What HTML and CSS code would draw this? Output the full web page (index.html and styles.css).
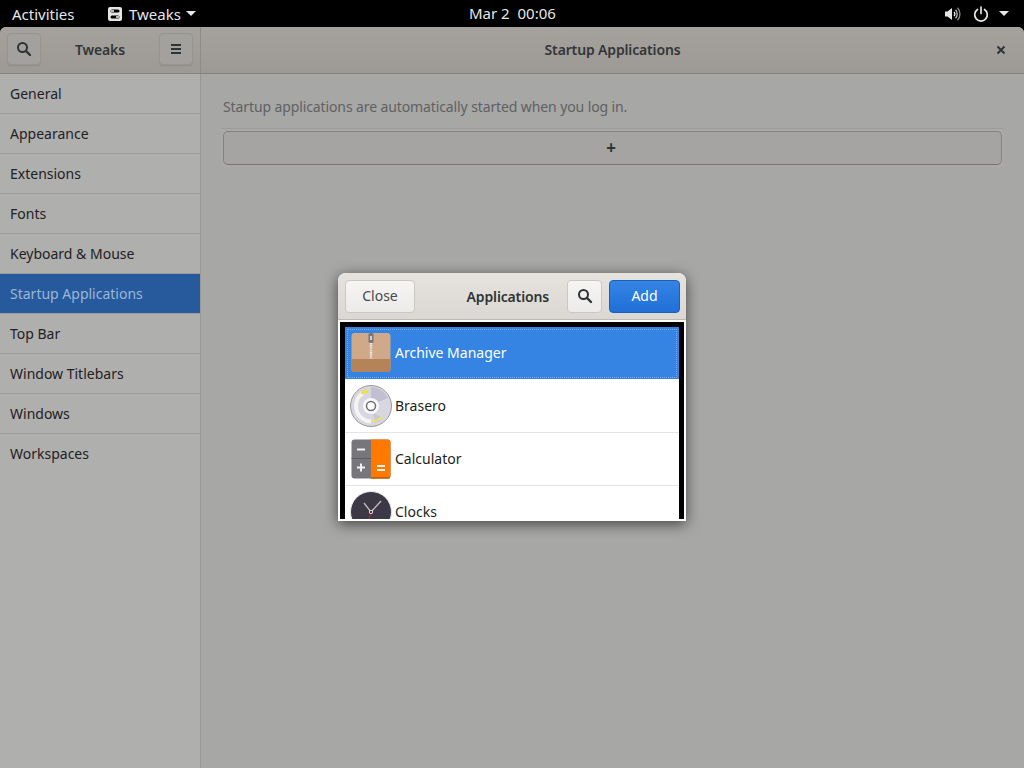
FILE: index.html
```html
<!DOCTYPE html>
<html>
<head>
  <title>Tweaks</title>
  <link rel="stylesheet" href="styles.css">
</head>
<body>
  <div class="topbar">
    <div class="topbar-left">
      <span class="activities">Activities</span>
      <span class="appmenu">
        <svg class="app-icon" width="14" height="14" viewBox="0 0 14 14"><path fill="#e6e6e6" fill-rule="evenodd" d="M2 0h10a2 2 0 0 1 2 2v10a2 2 0 0 1-2 2H2a2 2 0 0 1-2-2V2a2 2 0 0 1 2-2zM4 2.500a1.500 1.500 0 0 0 0 3h6a1.500 1.500 0 0 0 0-3zM4 8.500a1.500 1.500 0 0 0 0 3h6a1.500 1.500 0 0 0 0-3z"/><rect x="3" y="3.200" width="3" height="1.600" fill="#e6e6e6"/><rect x="8" y="9.200" width="3" height="1.600" fill="#e6e6e6"/></svg>
        Tweaks
        <span class="caret"></span>
      </span>
    </div>
    <div class="clock">Mar 2&nbsp; 00:06</div>
    <div class="topbar-right">
      <svg width="16" height="16" viewBox="0 0 16 16"><path fill="#e6e6e6" d="M0 5.500h2.500L7 2v12L2.500 10.500H0z"/><path fill="none" stroke="#e6e6e6" stroke-width="1.300" d="M9 6a3 3 0 0 1 0 4"/><path fill="none" stroke="#bdbdbd" stroke-width="1.300" d="M10.500 3.800a6 6 0 0 1 0 8.400"/><path fill="none" stroke="#8c8c8c" stroke-width="1.300" d="M12.500 1.800a9 9 0 0 1 0 12.400"/></svg>
      <svg class="power" width="16" height="16" viewBox="0 0 16 16"><path fill="none" stroke="#e6e6e6" stroke-width="1.700" stroke-linecap="round" d="M4.500 3.500a6.300 6.300 0 1 0 7 0M8 1v6.500"/></svg>
      <span class="caret"></span>
    </div>
  </div>

  <div class="window">
    <div class="titlebar">
      <div class="title-left">
        <button class="tool">
          <svg width="16" height="16" viewBox="0 0 16 16"><circle cx="6.500" cy="6.500" r="4.500" fill="none" stroke="#2e3436" stroke-width="2"/><path stroke="#2e3436" stroke-width="2.400" stroke-linecap="round" d="M10 10l4 4"/></svg>
        </button>
        <span class="title-text">Tweaks</span>
        <button class="tool">
          <svg width="12" height="12" viewBox="0 0 12 12"><path fill="#2e3436" d="M1 1h10v2H1zM1 5h10v2H1zM1 9h10v2H1z"/></svg>
        </button>
      </div>
      <div class="title-main">
        <span class="title-text">Startup Applications</span>
        <svg class="close-x" width="10" height="10" viewBox="0 0 10 10"><path stroke="#2e3436" stroke-width="2" d="M1.500 1.500l7 7M8.500 1.500l-7 7"/></svg>
      </div>
    </div>
    <div class="content">
      <ul class="sidebar">
        <li>General</li>
        <li>Appearance</li>
        <li>Extensions</li>
        <li>Fonts</li>
        <li>Keyboard &amp; Mouse</li>
        <li class="active">Startup Applications</li>
        <li>Top Bar</li>
        <li>Window Titlebars</li>
        <li>Windows</li>
        <li>Workspaces</li>
      </ul>
      <div class="main">
        <p class="hint">Startup applications are automatically started when you log in.</p>
        <div class="add-wrap"><button class="add-row">+</button></div>
      </div>
    </div>
  </div>

  <div class="dialog">
    <div class="dialog-head">
      <button class="btn btn-close">Close</button>
      <span class="dialog-title">Applications</span>
      <button class="btn btn-search">
        <svg width="16" height="16" viewBox="0 0 16 16"><circle cx="6.500" cy="6.500" r="4.500" fill="none" stroke="#2e3436" stroke-width="2"/><path stroke="#2e3436" stroke-width="2.400" stroke-linecap="round" d="M10 10l4 4"/></svg>
      </button>
      <button class="btn btn-add">Add</button>
    </div>
    <div class="dialog-body">
      <div class="app-list">
        <div class="app selected">
          <svg viewBox="0 0 42 42">
            <rect x="1.500" y="1" width="39" height="39" rx="3" fill="#cfa988"/>
            <path d="M1.500 27h39v10a3 3 0 0 1-3 3h-33a3 3 0 0 1-3-3z" fill="#b58358"/>
            <path d="M21 11v16" stroke="#ece8e2" stroke-width="2.400" stroke-dasharray="1.200 .6"/>
            <rect x="18.500" y="1" width="5" height="10" rx="1.500" fill="#77767b"/>
            <rect x="20.200" y="4" width="1.600" height="4" fill="#e8e8e8"/>
          </svg>
          <span>Archive Manager</span>
        </div>
        <div class="app">
          <svg viewBox="0 0 42 42">
            <circle cx="21" cy="21" r="20.500" fill="#d8d6de" stroke="#9a9a9a"/>
            <path d="M21 2a19 19 0 0 1 17 11l-12 5a6 6 0 0 0-5-3z" fill="#c2bfd2"/>
            <path d="M33 33a18 18 0 0 1-8 5l-2-10z" fill="#c9c7d6"/>
            <path d="M13 8a15.500 15.500 0 0 0 8 28.500" fill="none" stroke="#f4f4f4" stroke-width="4"/>
            <path d="M21 36a15 15 0 0 0 11-4" fill="none" stroke="#ece26a" stroke-width="2"/>
            <path d="M12 9a4 4 0 0 1 6-2" fill="none" stroke="#f0e040" stroke-width="3"/>
            <circle cx="21" cy="21" r="8" fill="#f8f8f8"/>
            <circle cx="21" cy="21" r="4.500" fill="#fdfdfd" stroke="#6f6f73" stroke-width="1.500"/>
          </svg>
          <span>Brasero</span>
        </div>
        <div class="app">
          <svg viewBox="0 0 42 42">
            <rect x="1.500" y="1.500" width="39" height="39" rx="3" fill="#77767b"/>
            <path d="M21 1.500h16.500a3 3 0 0 1 3 3v33a3 3 0 0 1-3 3H21z" fill="#ff7800"/>
            <path d="M1.500 20.500H21" stroke="#5e5c64"/>
            <path d="M21 39.800h19" stroke="#c65d00" stroke-width="1.500"/>
            <path d="M7 10.500h8v2H7zM7 28.500h8v2H7zM10 25.500h2v8h-2zM27 27h8v2h-8zM27 31h8v2h-8z" fill="#f2f2f2"/>
          </svg>
          <span>Calculator</span>
        </div>
        <div class="app">
          <svg viewBox="0 0 42 42">
            <circle cx="21" cy="21" r="20.500" fill="#3d3846" stroke="#e8e8e8"/>
            <path d="M21 21l-7-9M21 21l10-11" stroke="#c0bfbc" stroke-width="1.300"/>
            <path d="M21 21l-2.500 9" stroke="#e01b24"/>
            <circle cx="21" cy="21" r="1.700" fill="#3d3846" stroke="#deddda"/>
          </svg>
          <span>Clocks</span>
        </div>
      </div>
    </div>
  </div>
</body>
</html>
```

FILE: styles.css
```css
html, body {
  margin: 0;
  padding: 0;
  height: 100%;
  overflow: hidden;
}
body {
  font-family: "Noto Sans", sans-serif;
  font-size: 14px;
  color: #2e3436;
  background-color: #000;
  display: flex;
  flex-direction: column;
}
button {
  font-family: inherit;
  font-size: 14px;
  color: inherit;
  cursor: pointer;
}

/* top bar */
.topbar {
  height: 27px;
  font-size: 15px;
  color: #e6e6e6;
  display: flex;
  align-items: center;
  justify-content: space-between;
  position: relative;
  flex: none;
}
.topbar-left {
  display: flex;
  align-items: center;
  padding-left: 12px;
}
.activities {
  width: 96px;
}
.appmenu {
  display: flex;
  align-items: center;
  gap: 7px;
}
.appmenu .caret {
  margin-left: -2px;
}
.caret {
  display: inline-block;
  border-left: 5px solid transparent;
  border-right: 5px solid transparent;
  border-top: 5px solid #e6e6e6;
}
.clock {
  position: absolute;
  left: 469px;
  top: 3px;
}
.topbar-right {
  display: flex;
  align-items: center;
  padding-right: 15px;
}
.power {
  margin: 0 10px 0 12px;
}

/* main window */
.window {
  flex: 1;
  display: flex;
  flex-direction: column;
  background-color: #a7a7a6;
  border-radius: 6px 6px 0 0;
  overflow: hidden;
}
.titlebar {
  height: 46px;
  display: flex;
  flex: none;
  background: linear-gradient(#a5a29e, #9d9a96);
  border-bottom: 1px solid #85827e;
}
.title-left {
  width: 201px;
  flex: none;
  box-sizing: border-box;
  padding: 0 7px 2px;
  display: flex;
  align-items: center;
  justify-content: space-between;
  border-right: 1px solid #8f8c88;
}
.title-main {
  flex: 1;
  display: flex;
  align-items: center;
  justify-content: center;
  padding: 0 0 2px;
  position: relative;
}
.title-text {
  font-weight: 600;
  letter-spacing: -0.15px;
  color: #333637;
}
.close-x {
  position: absolute;
  right: 18px;
  top: 18px;
}
.tool {
  width: 34px;
  height: 32px;
  padding: 0;
  display: flex;
  align-items: center;
  justify-content: center;
  background: #a3a19d;
  border: 1px solid #989591;
  border-radius: 4px;
  box-shadow: 0 1px 1px #8f8c88;
}
.content {
  flex: 1;
  display: flex;
}
.sidebar {
  width: 200px;
  flex: none;
  margin: 0;
  padding: 0;
  list-style: none;
  background-color: #afafae;
  border-right: 1px solid #979796;
}
.sidebar li {
  height: 39px;
  line-height: 39px;
  padding-left: 10px;
  border-bottom: 1px solid #9d9d9c;
  color: #1f2123;
}
.sidebar li:last-child {
  border-bottom: none;
}
.sidebar li.active {
  background-color: #265a9d;
  background-clip: padding-box;
  color: #9db6d6;
}
.main {
  flex: 1;
  padding: 0 22px;
}
.hint {
  margin: 23px 0 0;
  height: 31px;
  line-height: 20px;
  letter-spacing: -0.11px;
  color: #5f6162;
}
.add-wrap {
  margin: 0 -2px;
  padding: 2px;
  background-color: #aaa9a8;
  border-top: 1px solid #9b9b9a;
}
.add-row {
  display: block;
  width: 100%;
  height: 34px;
  padding: 0 3px 0 0;
  font-size: 17px;
  font-weight: 700;
  line-height: 30px;
  color: #2e3436;
  background: #a5a4a2;
  border: 1px solid #85827e;
  border-bottom-color: #767370;
  border-radius: 5px;
}

/* applications dialog */
.dialog {
  position: absolute;
  left: 338px;
  top: 273px;
  width: 348px;
  height: 248px;
  display: flex;
  flex-direction: column;
  background-color: #fff;
  border-radius: 8px 8px 0 0;
  box-shadow: 0 3px 14px rgba(0, 0, 0, 0.6);
  overflow: hidden;
}
.dialog-head {
  height: 47px;
  flex: none;
  display: flex;
  align-items: center;
  box-sizing: border-box;
  padding: 0 6px 0 7px;
  background: linear-gradient(#e6e3df, #dbd8d3);
  border-bottom: 1px solid #bdb9b3;
}
.dialog-title {
  font-weight: 600;
  letter-spacing: -0.15px;
  color: #2e3436;
  margin-left: auto;
  margin-right: 18px;
}
.btn {
  height: 33px;
  padding: 0 0 2px;
  background: linear-gradient(#f6f5f4, #ecebe9);
  border: 1px solid #cdc7c2;
  border-radius: 4px;
}
.btn-close {
  width: 70px;
  color: #454a4b;
}
.btn-search {
  width: 35px;
  padding: 0;
  display: flex;
  align-items: center;
  justify-content: center;
}
.btn-add {
  width: 71px;
  margin-left: 7px;
  color: #fff;
  background: linear-gradient(#3584e4, #1f6fd8);
  border-color: #1b5fb8;
}
.dialog-body {
  flex: 1;
  min-height: 0;
  margin: 2px 2px 2px;
  background-color: #000;
  padding: 5px 5px 0;
}
.app-list {
  height: 100%;
  overflow: hidden;
  background-color: #fff;
  color: #1c1f20;
}
.app {
  height: 51px;
  display: flex;
  align-items: center;
  gap: 3px;
  padding: 0 0 1px 5px;
  border-bottom: 1px solid #e4e4e4;
}
.app svg {
  width: 42px;
  height: 42px;
  flex: none;
}
.selected {
  background-color: #3584e4;
  background-clip: padding-box;
  color: #fff;
  border-bottom-color: #fff;
  outline: 1px dotted #78adee;
  outline-offset: -3px;
}
```
